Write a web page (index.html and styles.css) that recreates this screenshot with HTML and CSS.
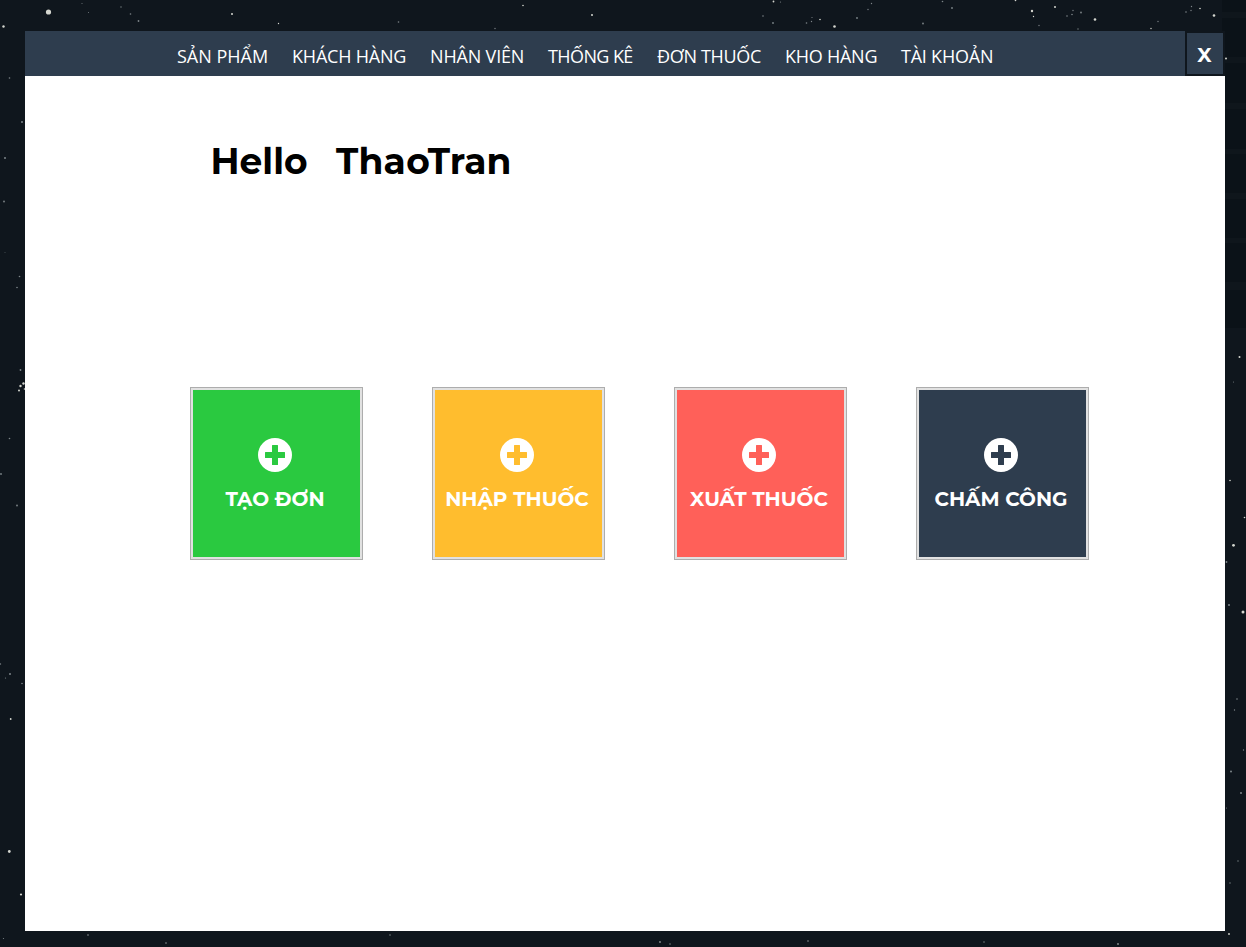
FILE: index.html
```html
<!DOCTYPE html>
<html lang="vi">
<head>
<meta charset="utf-8">
<title>Hello ThaoTran</title>
<link rel="stylesheet" href="styles.css">
</head>
<body>
<svg class="sky" viewBox="0 0 1246 947" aria-hidden="true">
<g fill="#0b1218"><rect x="1222" y="0" width="24" height="328"/></g>
<g fill="#0f161c"><rect x="1222" y="12" width="24" height="6"/><rect x="1222" y="57" width="24" height="6"/><rect x="1225" y="103" width="21" height="6"/><rect x="1225" y="149" width="21" height="5"/><rect x="1225" y="193" width="21" height="6"/><rect x="1225" y="238" width="21" height="5"/><rect x="1225" y="282" width="21" height="8"/></g>
<g fill="#d4d6cf"><circle cx="48.5" cy="12" r="2.6"/><circle cx="3.5" cy="26.5" r="1.2"/><circle cx="232" cy="14" r="1"/><circle cx="278.500" cy="23.500" r=".7"/><circle cx="592" cy="15" r="1"/><circle cx="523" cy="5.500" r=".8"/><circle cx="834.500" cy="26.500" r="1.300"/><circle cx="1032" cy="11" r="1.200"/><circle cx="1095" cy="19.500" r="1.300"/><circle cx="1214" cy="15.500" r="1.300"/><circle cx="1055" cy="7" r="1"/><circle cx="773.500" cy="1.500" r=".9"/><circle cx="820" cy="19.500" r=".8"/><circle cx="1015.500" cy=".5" r=".8"/><circle cx="1200" cy="8.500" r=".8"/><circle cx="1226" cy="58.500" r="1"/><circle cx="1151" cy="28.500" r=".7"/><circle cx="1033.500" cy="16.500" r=".7"/><circle cx="20.500" cy="386" r="1.200"/><circle cx="23.500" cy="383.500" r="1.200"/><circle cx="19" cy="390.500" r="1"/><circle cx="24.500" cy="389" r=".8"/><circle cx="9.300" cy="851.500" r="1.400"/><circle cx="21" cy="894.500" r="1.100"/><circle cx="10.700" cy="719" r=".9"/><circle cx="1233.500" cy="545.300" r="1.400"/><circle cx="1243" cy="612" r="1.500"/><circle cx="1239.500" cy="357" r="1"/><circle cx="1244.500" cy="517.500" r=".8"/><circle cx="1230" cy="480.500" r=".8"/><circle cx="1229" cy="934" r=".9"/></g>
<g fill="#7d8589"><circle cx="121" cy="7" r=".7"/><circle cx="130.500" cy="14" r=".8"/><circle cx="138.500" cy="21" r=".9"/><circle cx="82" cy="3.500" r=".5"/><circle cx="88.500" cy="12.500" r=".5"/><circle cx="398.500" cy="22" r=".8"/><circle cx="495" cy="28.500" r=".7"/><circle cx="763" cy="16" r=".8"/><circle cx="773" cy="23" r=".9"/><circle cx="780.500" cy="2" r=".6"/><circle cx="806.500" cy="23" r=".8"/><circle cx="812" cy="17.500" r=".6"/><circle cx="811.500" cy="21.500" r=".7"/><circle cx="857" cy="18" r=".9"/><circle cx="868" cy="9.500" r=".7"/><circle cx="871.500" cy="3.500" r=".7"/><circle cx="923" cy="23.500" r=".9"/><circle cx="942.500" cy="1.500" r=".8"/><circle cx="952" cy="8" r=".9"/><circle cx="1039" cy="25.500" r=".7"/><circle cx="1067" cy="16" r=".8"/><circle cx="1072" cy="14.500" r=".8"/><circle cx="1073" cy="10.500" r=".7"/><circle cx="1081" cy="12.500" r=".9"/><circle cx="1078" cy="29" r=".7"/><circle cx="1158" cy="21.500" r=".7"/><circle cx="1186" cy="12" r=".8"/><circle cx="1191" cy="10.500" r=".7"/><circle cx="1191.500" cy="6.500" r=".7"/><circle cx="9.500" cy="78" r=".8"/><circle cx="22" cy="122" r="1"/><circle cx="5" cy="158" r="1"/><circle cx="4" cy="201.500" r=".9"/><circle cx="5" cy="252.500" r=".4"/><circle cx="19.500" cy="276.500" r=".8"/><circle cx="17" cy="287.500" r=".8"/><circle cx="20.500" cy="370" r=".9"/><circle cx="9.500" cy="438.500" r=".8"/><circle cx="1" cy="474" r=".9"/><circle cx="17" cy="505.500" r=".9"/><circle cx=".5" cy="664" r=".7"/><circle cx="10" cy="674" r="1"/><circle cx="5.500" cy="678" r=".6"/><circle cx="22" cy="683.500" r=".8"/><circle cx="3.500" cy="938.500" r=".6"/><circle cx="1233.500" cy="382" r=".5"/><circle cx="1226.500" cy="562" r=".9"/><circle cx="1229" cy="605" r="1"/><circle cx="1237" cy="699" r=".8"/><circle cx="1234.500" cy="710" r=".7"/><circle cx="1243.500" cy="750" r=".7"/><circle cx="1231" cy="771.500" r="1"/><circle cx="1241" cy="793" r="1"/><circle cx="1226.500" cy="808" r=".5"/><circle cx="1238" cy="861" r=".7"/><circle cx="1230" cy="883" r=".7"/></g>
<g fill="#8c9294"><circle cx="88" cy="935" r=".8"/><circle cx="166" cy="943" r=".8"/><circle cx="390" cy="935" r=".7"/><circle cx="660" cy="942" r=".9"/><circle cx="670" cy="944" r=".7"/><circle cx="808" cy="941" r=".8"/><circle cx="984" cy="942" r=".7"/><circle cx="1118" cy="944" r=".9"/></g>
</svg>
<div class="window">
<header class="header">
<nav class="nav">
<a class="w1">SẢN PHẨM</a><a class="w2">KHÁCH HÀNG</a><a class="w3">NHÂN VIÊN</a><a class="w4">THỐNG KÊ</a><a class="w5">ĐƠN THUỐC</a><a class="w6">KHO HÀNG</a><a class="w7">TÀI KHOẢN</a>
</nav>
<button class="close">X</button>
</header>
<main class="content">
<h1 class="greeting"><span class="hello">Hello</span><span class="user">ThaoTran</span></h1>
<div class="tiles">
<button class="tile green"><svg class="plus" viewBox="0 0 34 34"><path fill-rule="evenodd" d="M17 0a17 17 0 1 0 0 34a17 17 0 1 0 0-34zM14.500 7h5a.5.5 0 0 1 .5.500V14h6.500a.5.5 0 0 1 .5.500v5a.5.5 0 0 1-.5.500H20v6.500a.5.5 0 0 1-.5.500h-5a.5.5 0 0 1-.5-.5V20H7.500a.5.5 0 0 1-.5-.5v-5a.5.5 0 0 1 .5-.5H14V7.500a.5.5 0 0 1 .5-.5z"/></svg><span>TẠO ĐƠN</span></button>
<button class="tile yellow"><svg class="plus" viewBox="0 0 34 34"><path fill-rule="evenodd" d="M17 0a17 17 0 1 0 0 34a17 17 0 1 0 0-34zM14.500 7h5a.5.5 0 0 1 .5.500V14h6.500a.5.5 0 0 1 .5.500v5a.5.5 0 0 1-.5.500H20v6.500a.5.5 0 0 1-.5.500h-5a.5.5 0 0 1-.5-.5V20H7.500a.5.5 0 0 1-.5-.5v-5a.5.5 0 0 1 .5-.5H14V7.500a.5.5 0 0 1 .5-.5z"/></svg><span>NHẬP THUỐC</span></button>
<button class="tile red"><svg class="plus" viewBox="0 0 34 34"><path fill-rule="evenodd" d="M17 0a17 17 0 1 0 0 34a17 17 0 1 0 0-34zM14.500 7h5a.5.5 0 0 1 .5.500V14h6.500a.5.5 0 0 1 .5.500v5a.5.5 0 0 1-.5.500H20v6.500a.5.5 0 0 1-.5.500h-5a.5.5 0 0 1-.5-.5V20H7.500a.5.5 0 0 1-.5-.5v-5a.5.5 0 0 1 .5-.5H14V7.500a.5.5 0 0 1 .5-.5z"/></svg><span>XUẤT THUỐC</span></button>
<button class="tile navy"><svg class="plus" viewBox="0 0 34 34"><path fill-rule="evenodd" d="M17 0a17 17 0 1 0 0 34a17 17 0 1 0 0-34zM14.500 7h5a.5.5 0 0 1 .5.500V14h6.500a.5.5 0 0 1 .5.500v5a.5.5 0 0 1-.5.500H20v6.500a.5.5 0 0 1-.5.500h-5a.5.5 0 0 1-.5-.5V20H7.500a.5.5 0 0 1-.5-.5v-5a.5.5 0 0 1 .5-.5H14V7.500a.5.5 0 0 1 .5-.5z"/></svg><span>CHẤM CÔNG</span></button>
</div>
</main>
</div>
</body>
</html>
```
FILE: styles.css
```css
* { box-sizing: border-box; }
body { margin: 0; height: 947px; padding: 31px 21px 16px 25px; background: #0f161d; overflow: hidden; }
.sky { position: absolute; left: 0; top: 0; width: 1246px; height: 947px; }
.window { position: relative; width: 1200px; height: 900px; display: flex; flex-direction: column; }
.header { height: 45px; display: flex; }
.nav { width: 1160px; padding: 13px 0 0 152px; display: flex; background: #2e3d4e; color: #fff; font: 18px/25px "Segoe UI", "Open Sans", sans-serif; white-space: nowrap; }
.w1 { width: 115px; }
.w2 { width: 138px; letter-spacing: -0.2px; }
.w3 { width: 118px; letter-spacing: -0.17px; }
.w4 { width: 109px; letter-spacing: -0.6px; }
.w5 { width: 128px; letter-spacing: -0.33px; }
.w6 { width: 116px; letter-spacing: -0.25px; }
.w7 { letter-spacing: -0.22px; }
.close { width: 40px; height: 45px; padding: 3px 1px 0 0; border: 2px solid #0f161d; background: #2e3d4e; color: #fff; font: bold 20px/38px Montserrat, Inter, sans-serif; }
.content { flex: 1; background: #fff; }
.greeting { margin: 0; padding: 62px 0 0 185.500px; height: 311px; display: flex; font: bold 36px/46px Montserrat, Inter, sans-serif; color: #000; }
.hello { width: 125.500px; }
.user { letter-spacing: 0.25px; }
.tiles { display: flex; gap: 69px; padding-left: 165px; }
.tile { width: 173px; height: 173px; padding: 49.500px 3px 0 0; border: 1px solid #adadad; box-shadow: inset 0 0 0 2px #e1e1e1; display: flex; flex-direction: column; align-items: center; gap: 14px; color: #fff; font: bold 20px/26px Montserrat, Inter, sans-serif; white-space: nowrap; }
.plus { width: 34px; height: 34px; fill: #fff; flex: none; }
.green { background: #2ac940; }
.yellow { background: #ffbd2e; }
.red { background: #ff6059; }
.navy { background: #2e3d4e; }
```
